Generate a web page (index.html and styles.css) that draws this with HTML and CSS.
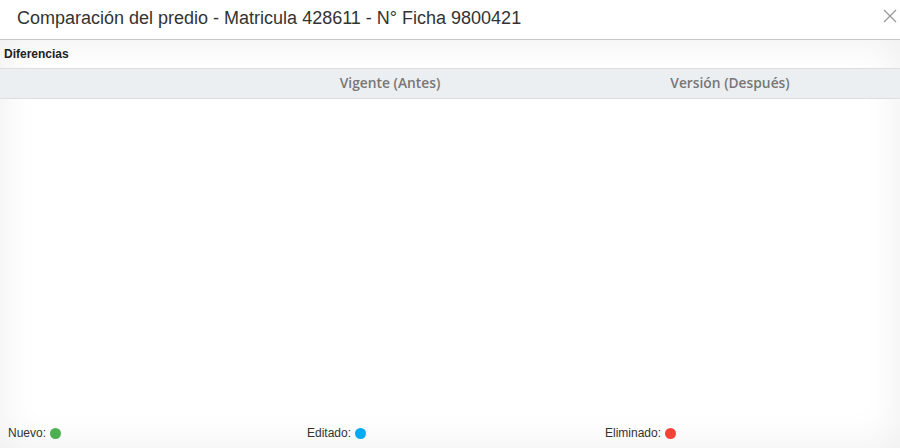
FILE: index.html
```html
<!DOCTYPE html>
<html lang="es">
<head>
<meta charset="utf-8">
<title>Comparación del predio</title>
<link rel="stylesheet" href="styles.css">
</head>
<body>
<div class="modal">
  <div class="modal-header">
    <h1 class="modal-title">Comparación del predio - Matricula 428611 - N° Ficha 9800421</h1>
    <svg class="close" width="14" height="14" viewBox="0 0 14 14" aria-label="Cerrar"><path d="M1 1 L13 13 M13 1 L1 13" stroke="#9a9a9a" stroke-width="1.3" fill="none"/></svg>
  </div>
  <div class="modal-body">
    <div class="section-title">Diferencias</div>
    <div class="table-head">
      <div class="col col-first"></div>
      <div class="col">Vigente (Antes)</div>
      <div class="col">Versión (Después)</div>
    </div>
    <div class="table-body"></div>
    <div class="legend">
      <div class="legend-item">Nuevo: <span class="dot dot-green"></span></div>
      <div class="legend-item">Editado: <span class="dot dot-blue"></span></div>
      <div class="legend-item">Eliminado: <span class="dot dot-red"></span></div>
    </div>
  </div>
</div>
</body>
</html>
```
FILE: styles.css
```css
* { box-sizing: border-box; }
html, body { margin: 0; padding: 0; }
body {
  width: 900px;
  height: 448px;
  font-family: "Liberation Sans", Arial, sans-serif;
  color: #333;
  background: #fff;
  overflow: hidden;
}
.modal {
  display: flex;
  flex-direction: column;
  height: 448px;
}
.modal-header {
  height: 40px;
  display: flex;
  align-items: center;
  justify-content: space-between;
  padding: 0 3px 0 17px;
  border-bottom: 1px solid #c8c8c8;
  flex: none;
}
.modal-title {
  margin: 0;
  font-size: 18px;
  font-weight: normal;
  color: #333;
  padding-bottom: 2px;
}
.close {
  display: block;
  margin-bottom: 7px;
}
.modal-body {
  flex: 1;
  display: flex;
  flex-direction: column;
  box-shadow: inset 0 0 40px rgba(0, 0, 0, 0.07);
}
.section-title {
  height: 28px;
  display: flex;
  align-items: center;
  padding-left: 4px;
  font-size: 12px;
  font-weight: bold;
  color: #222;
  padding-bottom: 1px;
}
.table-head {
  height: 31px;
  display: grid;
  grid-template-columns: 220px 1fr 1fr;
  background: #eceff1;
  border-top: 1px solid #dcdfe1;
  border-bottom: 1px solid #dcdfe1;
  font-family: "Open Sans", "Liberation Sans", sans-serif;
  font-size: 13.8px;
  font-weight: 600;
  color: #777;
}
.col {
  display: flex;
  align-items: center;
  justify-content: center;
  padding-bottom: 2px;
}
.table-body { flex: 1; }
.legend {
  height: 30px;
  display: grid;
  grid-template-columns: 1fr 1fr 1fr;
  font-size: 12px;
  color: #333;
}
.legend-item {
  display: flex;
  align-items: center;
  gap: 4px;
}
.legend-item:nth-child(1) { padding-left: 8px; }
.legend-item:nth-child(2) { padding-left: 7px; }
.legend-item:nth-child(3) { padding-left: 5px; }
.dot {
  width: 11px;
  height: 11px;
  border-radius: 50%;
  display: inline-block;
}
.dot-green { background: #4caf50; }
.dot-blue { background: #03a9f4; }
.dot-red { background: #f44336; }
```
